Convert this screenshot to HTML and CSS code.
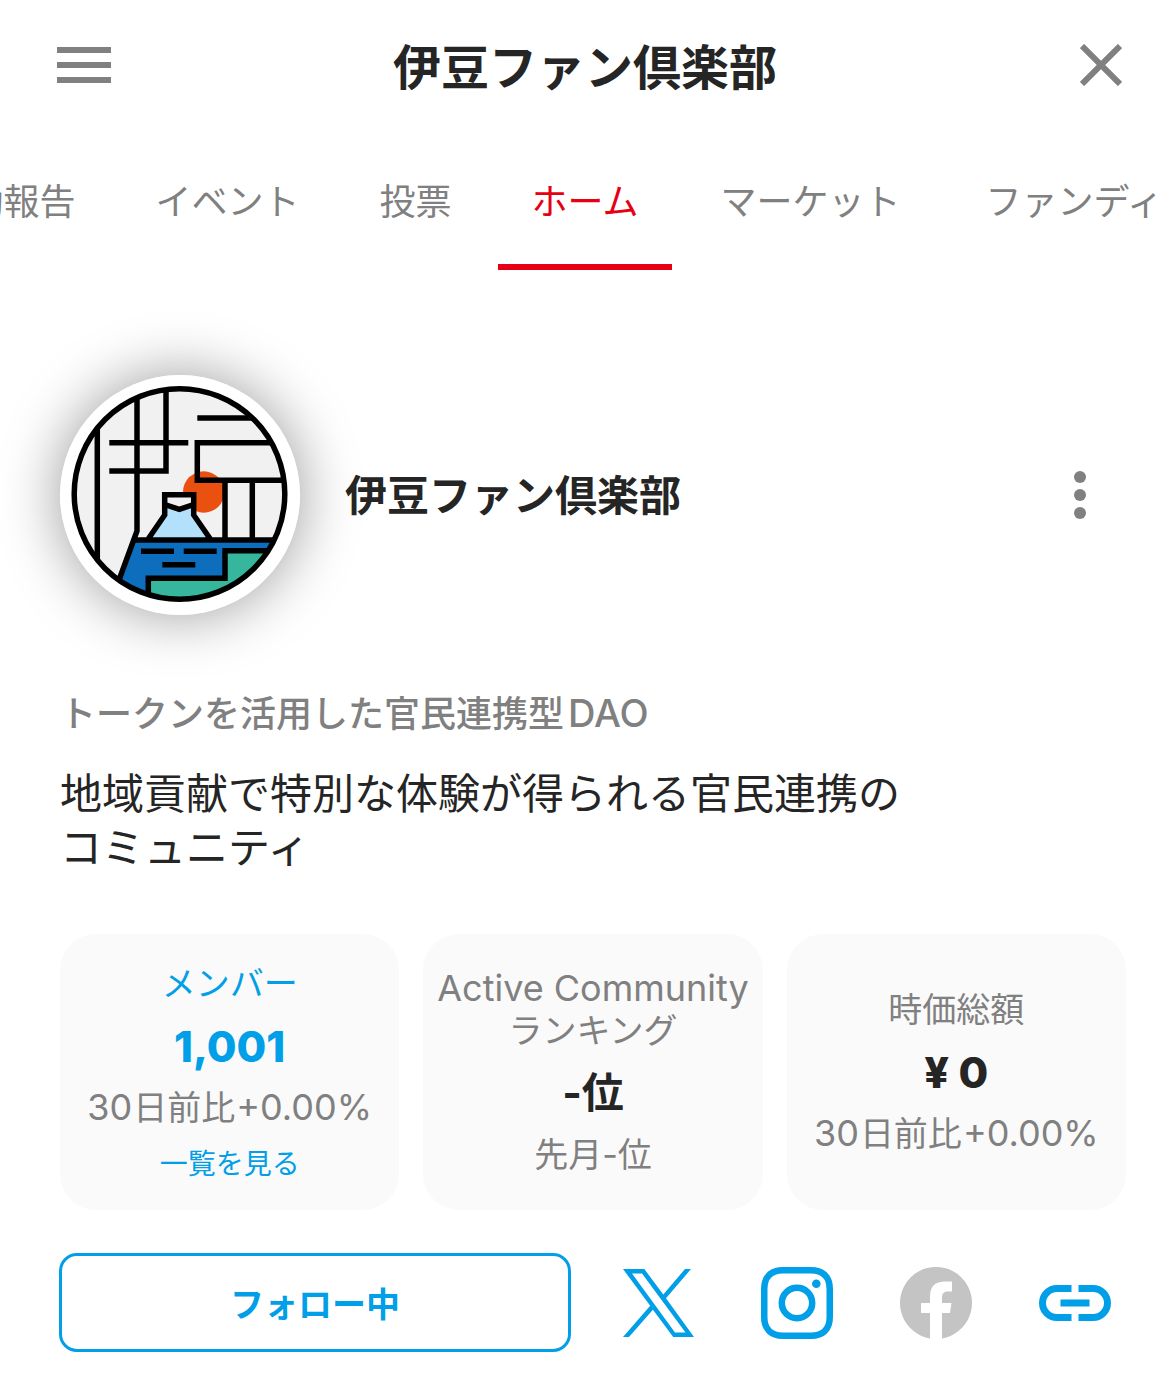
FILE: index.html
```html
<!DOCTYPE html>
<html lang="ja">
<head>
<meta charset="utf-8">
<meta name="viewport" content="width=device-width, initial-scale=1">
<title>伊豆ファン倶楽部</title>
<link rel="stylesheet" href="styles.css">
</head>
<body>
<header class="topbar">
  <button class="icon-button" type="button" aria-label="メニュー">
    <svg width="54" height="36" viewBox="0 0 54 36"><path d="M0 3h54M0 18h54M0 33h54" stroke="currentColor" stroke-width="6"/></svg>
  </button>
  <h1 class="topbar-title">伊豆ファン倶楽部</h1>
  <button class="icon-button close" type="button" aria-label="閉じる">
    <svg width="42" height="42" viewBox="0 0 42 42"><path d="M2 2l38 38M40 2L2 40" stroke="currentColor" stroke-width="6"/></svg>
  </button>
</header>

<nav class="tabs" aria-label="コミュニティ">
  <div class="tab-group tab-group-before">
    <a class="tab" href="#reports">活動報告</a>
    <a class="tab" href="#events">イベント</a>
    <a class="tab" href="#votes">投票</a>
  </div>
  <a class="tab tab-active" href="#home" aria-current="page">ホーム</a>
  <div class="tab-group tab-group-after">
    <a class="tab" href="#market">マーケット</a>
    <a class="tab tab-last" href="#funding">ファンディ</a>
  </div>
</nav>

<main class="content" id="home">
  <section class="profile">
    <svg class="avatar" viewBox="0 0 240 240" role="img" aria-label="伊豆ファン倶楽部のロゴ">
      <defs><clipPath id="disc"><circle cx="119.500" cy="119" r="106"/></clipPath></defs>
      <circle cx="120" cy="120" r="120" fill="#fff"/>
      <g clip-path="url(#disc)">
        <path fill="#f1f1f1" d="M10 10h220v220H10z"/>
        <circle cx="143.700" cy="117" r="20.700" fill="#ea500f"/>
        <path fill="#b3e0fb" d="M104.500 119.700h29.500V140l17 25H88l16.500-25z"/>
        <path fill="#f1f1f1" d="M104.700 120h28.600v10l-14 4.300-14.600-4.300z"/>
        <path fill="#0c6ebd" d="M74 165h150v65H50z"/>
        <path fill="#36b69d" d="M88.300 235v-31.700H165v-27.600h60V235z"/>
        <g fill="none" stroke="#000" stroke-width="5.500">
          <path d="M37.300 45v145M77 18v138L59 205M106 10v86H49.300M49.300 67.700h79M137.300 43H200M212 67.700h-74.700v37.600H228M165 105.300V165M192.300 105.300V165"/>
          <path d="M87.500 165l17.200-25v-20.300h29V140l17.300 25M104.700 129.500l14.600 4.800 14.400-4.800M73 165h145"/>
          <path d="M81 176.300h33M123.700 176.300h33M102.300 189.700h33M88.300 230v-26.700H165v-27.600h50"/>
        </g>
      </g>
      <circle cx="119.500" cy="119" r="105.300" fill="none" stroke="#000" stroke-width="5.500"/>
    </svg>
    <h2 class="profile-name">伊豆ファン倶楽部</h2>
    <button class="icon-button more" type="button" aria-label="その他">
      <svg width="12" height="48" viewBox="0 0 12 48" fill="currentColor"><circle cx="6" cy="6" r="6"/><circle cx="6" cy="24" r="6"/><circle cx="6" cy="42" r="6"/></svg>
    </button>
  </section>

  <p class="tagline">トークンを活用した官民連携型<span class="tagline-latin">DAO</span></p>
  <p class="description">地域貢献で特別な体験が得られる官民連携の<br>コミュニティ</p>

  <section class="stats">
    <article class="card card-link">
      <h3 class="card-label">メンバー</h3>
      <p class="card-value card-number">1,001</p>
      <p class="card-note"><span class="latin">30</span><span class="kanji">日前比</span><span class="latin">+0.00%</span></p>
      <a class="card-more" href="#members">一覧を見る</a>
    </article>
    <article class="card">
      <h3 class="card-label"><span class="latin">Active Community</span><br>ランキング</h3>
      <p class="card-value">-位</p>
      <p class="card-note">先月-位</p>
    </article>
    <article class="card">
      <h3 class="card-label">時価総額</h3>
      <p class="card-value card-number">¥ 0</p>
      <p class="card-note"><span class="latin">30</span><span class="kanji">日前比</span><span class="latin">+0.00%</span></p>
    </article>
  </section>

  <section class="actions">
    <button class="follow" type="button">フォロー中</button>
    <a class="social" href="#x" aria-label="X">
      <svg width="72" height="72" viewBox="0 0 72 72"><path fill="currentColor" fill-rule="evenodd" d="M1 2h21.300l19 25.500L63 2h6L44 31.200 72 70H51.200L30.900 42.700 7 70H1l27.200-31.300zM10 6.500L53 65.500h10.500L20 6.500z"/></svg>
    </a>
    <a class="social" href="#instagram" aria-label="Instagram">
      <svg width="72" height="72" viewBox="0 0 72 72" fill="none" stroke="currentColor" stroke-width="6.500"><path d="M22 3.250h28C62 3.250 68.750 10 68.750 22v28C68.750 62 62 68.750 50 68.750H22C10 68.750 3.250 62 3.250 50V22C3.250 10 10 3.250 22 3.250z"/><circle cx="36" cy="36" r="15.200"/><circle cx="55.300" cy="16.700" r="4.300" fill="currentColor" stroke="none"/></svg>
    </a>
    <a class="social social-off" href="#facebook" aria-label="Facebook">
      <svg width="72" height="72" viewBox="0 0 72 72"><path fill="currentColor" d="M30 71.500a36 36 0 1 1 12 0V46h8l1.500-10H42v-5.500c0-4 2-6 6-6h4V14.500h-7c-10 0-15 5-15 15V36h-9v10h9z"/></svg>
    </a>
    <a class="social" href="#website" aria-label="リンク">
      <svg width="72" height="72" viewBox="0 0 72 72" fill="none" stroke="currentColor" stroke-width="7"><path d="M32.500 21.500H18a14.500 14.500 0 0 0 0 29h14.500M39.500 21.500H54a14.500 14.500 0 0 1 0 29H39.500M21.500 36h29"/></svg>
    </a>
  </section>
</main>
</body>
</html>
```
FILE: styles.css
```css
* {
  box-sizing: border-box;
  margin: 0;
}

body {
  background: #fff;
  color: #252525;
  font-family: Inter, "Noto Sans CJK JP", sans-serif;
  overflow-x: hidden;
}

button {
  padding: 0;
  border: 0;
  background: none;
  font: inherit;
}

a {
  color: inherit;
  text-decoration: none;
}

svg {
  display: block;
}

.topbar {
  display: grid;
  grid-template-columns: 1fr auto 1fr;
  align-items: center;
  height: 130px;
}

.topbar-title {
  padding-top: 6px;
  font-size: 48px;
  font-weight: 700;
  line-height: 72px;
}

.icon-button {
  justify-self: start;
  padding: 0 0 0 57px;
  color: #808080;
}

.close {
  justify-self: end;
  padding: 0 48px 0 0;
}

.tabs {
  display: grid;
  grid-template-columns: minmax(0, 1fr) auto minmax(0, 1fr);
  gap: 13px;
  height: 140px;
  overflow: hidden;
}

.tab-group {
  display: flex;
  gap: 14px;
}

.tab-group-before {
  justify-content: flex-end;
}

.tab-group-after {
  padding-left: 2px;
}

.tab {
  flex: none;
  padding: 45px 33px 0;
  border-bottom: 6px solid transparent;
  color: #808080;
  font-size: 36px;
  line-height: 54px;
  white-space: nowrap;
}

.tab-active {
  padding: 45px 34px 0;
  border-bottom-color: #e60012;
  color: #e60012;
}

.tab-last {
  padding: 45px 0 0 38px;
}

.content {
  padding: 105px 44px 22px 60px;
}

.profile {
  display: flex;
  align-items: center;
  gap: 45px;
}

.avatar {
  flex: none;
  width: 240px;
  height: 240px;
  border-radius: 50%;
  box-shadow: 0 0 60px rgba(0, 0, 0, 0.4);
}

.profile-name {
  flex: 1;
  padding-top: 2px;
  font-size: 42px;
  font-weight: 700;
  line-height: 60px;
}

.more {
  padding: 0 40px;
}

.tagline {
  margin-top: 72px;
  color: #808080;
  font-size: 36px;
  font-weight: 500;
  line-height: 54px;
}

.tagline-latin {
  margin-left: 4px;
  font-size: 38px;
  line-height: 1;
}

.description {
  margin-top: 26px;
  font-size: 42px;
  line-height: 54px;
}

.stats {
  display: grid;
  grid-template-columns: repeat(3, minmax(0, 1fr));
  gap: 24px;
  margin-top: 59px;
}

.card {
  display: flex;
  flex-direction: column;
  align-items: center;
  justify-content: center;
  min-height: 276px;
  border-radius: 36px;
  background: #fafafa;
  text-align: center;
  white-space: nowrap;
}

.card-label,
.card-note {
  color: #808080;
  font-size: 34px;
  font-weight: 400;
  line-height: 42px;
}

.latin {
  font-size: 36px;
  line-height: 1;
}

.card-value {
  margin: 14px 0;
  font-size: 42px;
  font-weight: 700;
  line-height: 54px;
}

.card-number {
  font-size: 43px;
  font-weight: 800;
}

.kanji {
  margin: 0 1px;
}

.card-more {
  margin-top: 18px;
  font-size: 28px;
  line-height: 34px;
}

.card-link .card-label,
.card-link .card-value,
.card-more {
  color: #009fe8;
}

.actions {
  display: flex;
  align-items: center;
  gap: 67px;
  margin-top: 43px;
  padding-right: 15px;
}

.follow {
  flex: 1;
  height: 99px;
  margin: 0 -16px 0 -1px;
  border: 3px solid #009fe8;
  border-radius: 18px;
  color: #009fe8;
  font-size: 34px;
  font-weight: 700;
}

.social {
  flex: none;
  color: #009fe8;
}

.social-off {
  color: #c4c4c4;
}
```
